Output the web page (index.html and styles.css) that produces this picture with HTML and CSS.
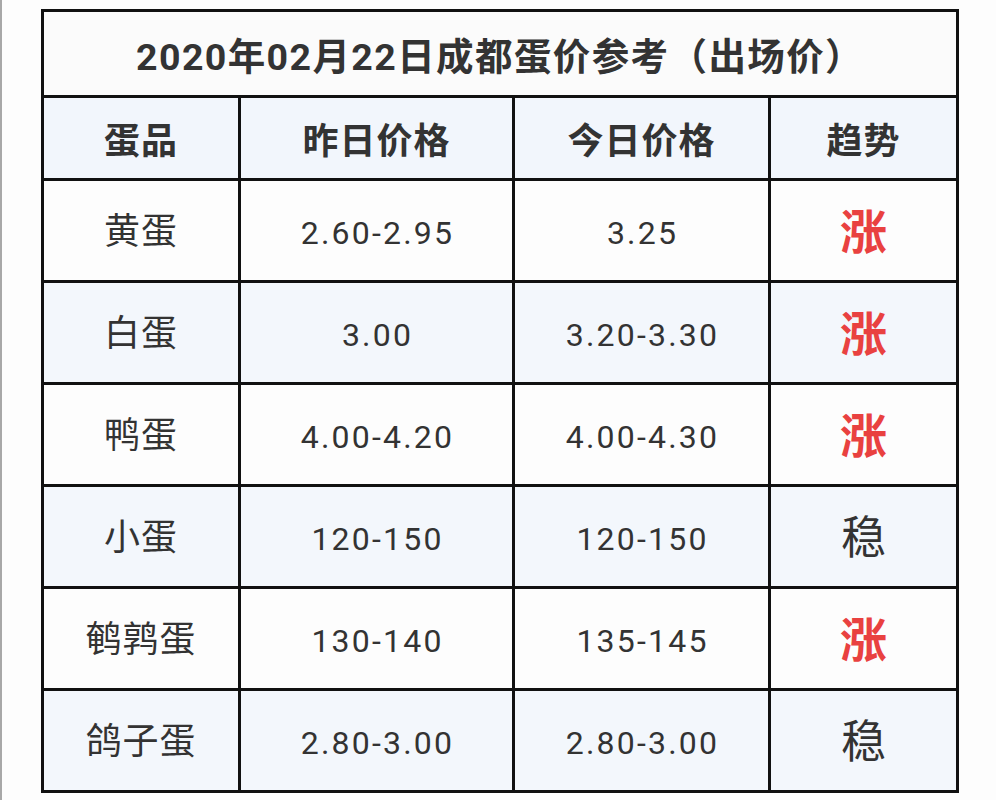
FILE: index.html
```html
<!DOCTYPE html>
<html lang="zh-CN">
<head>
<meta charset="utf-8">
<title>2020年02月22日成都蛋价参考</title>
<link rel="stylesheet" href="styles.css">
</head>
<body>
<div class="page">
  <table class="prices">
    <colgroup>
      <col class="c1"><col class="c2"><col class="c3"><col class="c4">
    </colgroup>
    <tr class="title-row"><td colspan="4" class="title">2020年02月22日成都蛋价参考（出场价）</td></tr>
    <tr class="head-row">
      <th>蛋品</th><th>昨日价格</th><th>今日价格</th><th>趋势</th>
    </tr>
    <tr class="row odd"><td class="name">黄蛋</td><td class="num">2.60-2.95</td><td class="num">3.25</td><td class="trend up">涨</td></tr>
    <tr class="row even"><td class="name">白蛋</td><td class="num">3.00</td><td class="num">3.20-3.30</td><td class="trend up">涨</td></tr>
    <tr class="row odd"><td class="name">鸭蛋</td><td class="num">4.00-4.20</td><td class="num">4.00-4.30</td><td class="trend up">涨</td></tr>
    <tr class="row even"><td class="name">小蛋</td><td class="num">120-150</td><td class="num">120-150</td><td class="trend flat">稳</td></tr>
    <tr class="row odd"><td class="name">鹌鹑蛋</td><td class="num">130-140</td><td class="num">135-145</td><td class="trend up">涨</td></tr>
    <tr class="row even"><td class="name">鸽子蛋</td><td class="num">2.80-3.00</td><td class="num">2.80-3.00</td><td class="trend flat">稳</td></tr>
  </table>
</div>
</body>
</html>
```

FILE: styles.css
```css
html, body {
  margin: 0;
  padding: 0;
  background: #fdfdfd;
}
body {
  font-family: Roboto, "Noto Sans CJK SC", sans-serif;
  color: #333;
}
.page {
  min-height: 800px;
  box-sizing: border-box;
  border-left: 2px solid #a8a8a8;
  padding: 9px 0 0 39px;
}
.prices {
  border-collapse: collapse;
  table-layout: fixed;
  width: 915px;
  border: 3px solid #111;
}
.c1 { width: 197px; }
.c2 { width: 274px; }
.c3 { width: 256px; }
.c4 { width: 188px; }
.prices td, .prices th {
  border: 3px solid #111;
  text-align: center;
  padding: 0;
}
.title-row td {
  height: 83px;
  background: #fbfbfb;
  font-size: 37.5px;
  font-weight: 700;
  letter-spacing: 1.4px;
}
.head-row th {
  height: 80px;
  background: #f2f6fc;
  font-size: 36px;
  font-weight: 700;
  color: #333;
  letter-spacing: 1px;
}
.row td {
  height: 94px;
}
.row.odd td { background: #fdfdfd; }
.row.even td { background: #f3f7fc; }
.prices .name {
  font-size: 36px;
  font-weight: 400;
  letter-spacing: 1px;
  padding-bottom: 5px;
}
.prices .num {
  font-size: 32px;
  font-weight: 400;
  letter-spacing: 2.2px;
  text-indent: 2px;
  padding-top: 5px;
}
.prices .trend {
  font-size: 47px;
  padding-bottom: 5px;
}
.trend.up {
  color: #e94140;
  font-weight: 700;
}
.trend.flat {
  color: #333;
  font-weight: 400;
  font-size: 45px;
}
```
